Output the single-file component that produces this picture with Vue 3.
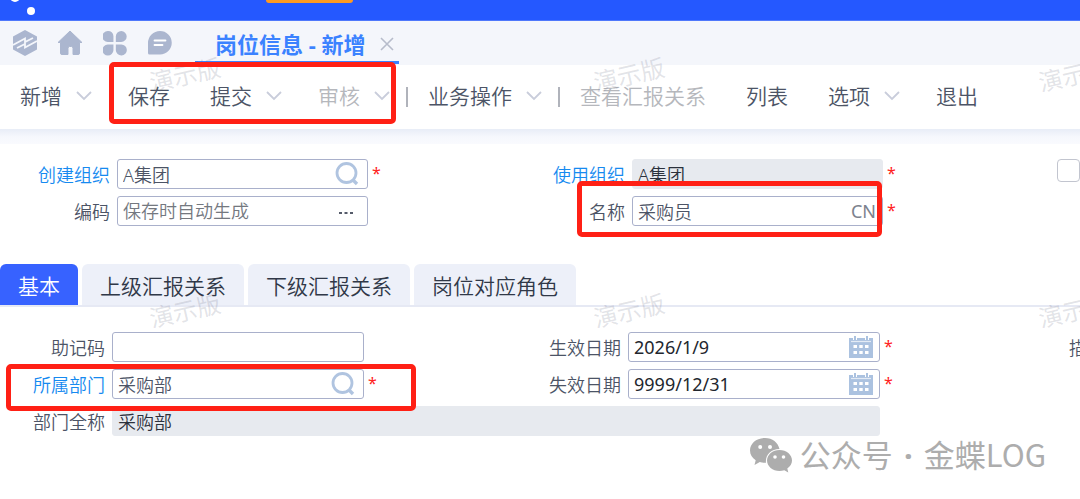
<script setup>
import { ref } from 'vue'

const tools = [
  { text: '新增', menu: true },
  { text: '保存' },
  { text: '提交', menu: true },
  { text: '审核', menu: true, off: true, sep: true },
  { text: '业务操作', menu: true, sep: true },
  { text: '查看汇报关系', off: true },
  { text: '列表' },
  { text: '选项', menu: true },
  { text: '退出' },
]
const tabs = ['基本', '上级汇报关系', '下级汇报关系', '岗位对应角色']
const active = ref(0)

const createOrg = ref('A集团')
const code = ref('')
const useOrg = ref('A集团')
const name = ref('采购员')
const mnemonic = ref('')
const dept = ref('采购部')
const deptFull = ref('采购部')
const flagged = ref(false)
const dates = ref([
  { id: 'start', label: '生效日期', value: '2026/1/9' },
  { id: 'end', label: '失效日期', value: '9999/12/31' },
])
</script>

<template>
  <div class="page">
    <header class="top">
      <svg class="logo" width="40" height="20" viewBox="0 0 40 20" aria-hidden="true">
        <circle cx="15" cy="-3" r="5" fill="#fff" />
        <circle cx="31" cy="11" r="4" fill="#fff" />
      </svg>
      <span class="flag"></span>
    </header>

    <nav class="pages">
      <button class="ico" aria-label="平台">
        <svg width="24" height="26" viewBox="0 0 24 26">
          <path d="M12 0 24 6.500V19.500L12 26 0 19.500V6.500Z" fill="#abb6cf" />
          <path d="M0 15 12 8.500V12L20 8M24 11 12 17.500V14L4 18" fill="none" stroke="#f4f6fb" stroke-width="1.800" />
        </svg>
      </button>
      <button class="ico" aria-label="首页">
        <svg width="24" height="26" viewBox="0 0 24 26">
          <path d="M12 1 24 12.500H21.500V23Q21.500 24.500 20 24.500H15V18.500Q15 16.500 13.500 16.500H11.500Q10 16.500 10 18.500V24.500H4Q2.500 24.500 2.500 23V12.500H0Z" fill="#abb6cf" stroke="#abb6cf" stroke-linejoin="round" />
        </svg>
      </button>
      <button class="ico" aria-label="应用">
        <svg width="24" height="26" viewBox="1 1 22 25" fill="#abb6cf">
          <path d="M5 2A5 5 0 0 1 10.500 7V12.500H5A5.200 5.200 0 0 1 5 2ZM18 2A5.200 5.200 0 0 1 18 12.500H12.800V7A5.200 5.200 0 0 1 18 2ZM5 15H10.500V20.500A5.300 5.300 0 1 1 5 15ZM12.800 15H18A5.300 5.300 0 1 1 12.800 20.500Z" />
        </svg>
      </button>
      <button class="ico" aria-label="消息">
        <svg width="24" height="26" viewBox="0 0 24 26">
          <path d="M12 1A11.700 11.700 0 0 1 12 24.500H1.500Q0 24.500 0 23V13A12 12 0 0 1 12 1Z" fill="#abb6cf" />
          <path d="M6.500 10.500H17.500M6.500 15H14.500" stroke="#fff" stroke-width="1.800" stroke-linecap="round" />
        </svg>
      </button>
      <div class="doc">
        <a href="#">岗位信息 - 新增</a>
        <button class="close" aria-label="关闭">
          <svg width="14" height="14" viewBox="0 0 14 14"><path d="M1 1 13 13M13 1 1 13" stroke="#b7bccb" stroke-width="1.600" /></svg>
        </button>
      </div>
    </nav>

    <div class="tools">
      <template v-for="t in tools" :key="t.text">
        <button class="tool" :class="{ menu: t.menu }" :disabled="t.off">
          {{ t.text }}
          <svg v-if="t.menu" width="16" height="10" viewBox="0 0 16 10"><path d="M1 1 8 8 15 1" fill="none" stroke="#c9cddb" stroke-width="1.800" /></svg>
        </button>
        <span v-if="t.sep" class="sep"></span>
      </template>
    </div>

    <main>
      <section class="grid head">
        <div class="field">
          <label class="link" for="createOrg">创建组织</label>
          <div class="box">
            <input id="createOrg" v-model="createOrg" type="text" />
            <button aria-label="查找创建组织">
              <svg width="24" height="24" viewBox="0 0 24 24"><circle cx="11.500" cy="11" r="9.500" fill="none" stroke="#b0c4e0" stroke-width="2.800" /><path d="M17.500 17.500 22 22" stroke="#b0c4e0" stroke-width="3.400" /></svg>
            </button>
          </div>
          <span class="star">*</span>
        </div>
        <div class="field">
          <label class="link" for="useOrg">使用组织</label>
          <div class="box flat"><input id="useOrg" v-model="useOrg" type="text" readonly /></div>
          <span class="star">*</span>
        </div>
        <div class="tick"><input v-model="flagged" type="checkbox" aria-label="标记" /></div>
        <div class="field">
          <label for="code">编码</label>
          <div class="box">
            <input id="code" v-model="code" type="text" placeholder="保存时自动生成" />
            <button class="more" aria-label="更多">
              <svg width="14" height="4" viewBox="0 0 14 4" fill="#555b6a"><path d="M0 1H3V3H0ZM5.500 1H8.500V3H5.500ZM11 1H14V3H11Z" /></svg>
            </button>
          </div>
        </div>
        <div class="field">
          <label for="name">名称</label>
          <div class="box">
            <input id="name" v-model="name" type="text" />
            <button class="lang">CN</button>
          </div>
          <span class="star">*</span>
        </div>
      </section>

      <div class="tabs" role="tablist">
        <button v-for="(t, i) in tabs" :key="t" role="tab" :aria-selected="active === i" :class="{ on: active === i }" @click="active = i">{{ t }}</button>
      </div>

      <section class="grid basic">
        <div class="field">
          <label for="mnemonic">助记码</label>
          <div class="box"><input id="mnemonic" v-model="mnemonic" type="text" /></div>
        </div>
        <div v-for="(d, i) in dates" :key="d.id" class="field" :class="'date' + i">
          <label :for="d.id">{{ d.label }}</label>
          <div class="box dark">
            <input :id="d.id" v-model="d.value" type="text" />
            <button class="cal" :aria-label="'选择' + d.label">
              <svg width="24" height="22" viewBox="0 0 24 22">
                <path d="M0 2H4V4H8V2H16V4H20V2H24V22H0Z" fill="#abc2e0" />
                <path d="M2 5.500H22" stroke="#e3ebf5" stroke-width="1.200" />
                <path d="M6 0V4M18 0V4" stroke="#abc2e0" stroke-width="2" />
                <path d="M4.500 9H8V12H4.500ZM10.300 9H13.700V12H10.300ZM16 9H19.500V12H16ZM4.500 15H8V18H4.500ZM10.300 15H13.700V18H10.300ZM16 15H19.500V18H16Z" fill="#fff" />
              </svg>
            </button>
          </div>
          <span class="star">*</span>
        </div>
        <div class="remark">描述</div>
        <div class="field">
          <label class="link" for="dept">所属部门</label>
          <div class="box">
            <input id="dept" v-model="dept" type="text" />
            <button aria-label="查找所属部门">
              <svg width="24" height="24" viewBox="0 0 24 24"><circle cx="11.500" cy="11" r="9.500" fill="none" stroke="#b0c4e0" stroke-width="2.800" /><path d="M17.500 17.500 22 22" stroke="#b0c4e0" stroke-width="3.400" /></svg>
            </button>
          </div>
          <span class="star">*</span>
        </div>
        <div class="field wide">
          <label for="deptFull">部门全称</label>
          <div class="box flat"><input id="deptFull" v-model="deptFull" type="text" readonly /></div>
        </div>
      </section>
    </main>

    <span v-for="n in 6" :key="n" class="stamp" :class="'s' + n">演示版</span>
    <i class="mark m1"></i>
    <i class="mark m2"></i>
    <i class="mark m3"></i>

    <div class="credit">
      <svg width="42" height="36" viewBox="0 0 42 36">
        <path d="M15 1C6.500 1 0 6.500 0 13.500 0 17.500 2.200 21 5.700 23.200L4.500 28 9.800 25Q13 26 16 25.700C15 18 21.500 11.800 29.500 12C28 5.500 22.500 1 15 1Z" fill="#adadad" />
        <path d="M29.500 13C22.500 13 17 17.800 17 23.500S22.500 34 29.500 34Q32 34 34.300 33.200L38.300 35.500 37.300 31.500C40.200 29.500 42 26.700 42 23.500 42 17.800 36.500 13 29.500 13Z" fill="#adadad" />
        <g fill="#fff"><circle cx="10.200" cy="10" r="2" /><circle cx="20" cy="10" r="2" /><circle cx="25" cy="20" r="1.800" /><circle cx="33.500" cy="20" r="1.800" /></g>
      </svg>
      <span>公众号<span class="dot"> · </span>金蝶LOG</span>
    </div>
  </div>
</template>

<style>
body {
  margin: 0;
}
</style>

<style scoped>
.page {
  position: relative;
  min-height: 100vh;
  overflow: hidden;
  background: #fff;
  color: #4c5466;
  font-family: "Noto Sans", "Noto Sans CJK SC", sans-serif;
  font-size: 18px;
  font-weight: 350;
}
.page * {
  box-sizing: border-box;
}
button,
input {
  margin: 0;
  padding: 0;
  border: 0;
  background: none;
  color: inherit;
  font: inherit;
}
svg {
  display: block;
  flex: none;
}
.top {
  display: flex;
  height: 21px;
  background: #2558ff;
  border-bottom: 1px solid #4f78fb;
}
.flag {
  width: 87px;
  height: 3px;
  margin-left: 226px;
  border-radius: 0 0 3px 3px;
  background: #ff9a1f;
}
.pages {
  display: flex;
  align-items: center;
  gap: 21px;
  height: 44px;
  padding-left: 13px;
  background: #f4f6fb;
}
.ico {
  width: 24px;
  flex: none;
}
.doc {
  display: flex;
  align-items: center;
  align-self: stretch;
  gap: 15px;
  height: 43px;
  margin-left: 2px;
  padding: 5px 5px 0 20px;
  border-bottom: 3px solid #3b82ff;
}
.doc a {
  color: #3b82ff;
  font-size: 22px;
  font-weight: 700;
  line-height: 32px;
  text-decoration: none;
  white-space: nowrap;
}
.tools {
  display: flex;
  align-items: center;
  height: 64px;
}
.tool {
  display: flex;
  align-items: center;
  flex: none;
  gap: 14px;
  padding: 0 20px 2px;
  font-size: 21px;
  line-height: 32px;
}
.tool.menu {
  padding-right: 16px;
}
.tool:disabled {
  color: #b5b7bc;
}
.sep {
  width: 2px;
  height: 20px;
  flex: none;
  background: #b0b3bb;
}
main {
  background: linear-gradient(#e8edf7, #f6f8fd 8px, #f9fafe 15px, #fff 15px);
}
.grid {
  display: grid;
  grid-template-columns: 43fr 43fr 4fr;
  row-gap: 7px;
}
.head {
  --label: 110px;
  --tail: 147px;
  padding: 30px 0 38px;
}
.basic {
  --label: 105px;
  --tail: 152px;
  padding-top: 25px;
}
.field {
  display: grid;
  grid-template-columns: var(--label) 1fr var(--tail);
  min-width: 0;
}
.field label {
  padding-top: 2px;
  line-height: 28px;
  text-align: right;
  white-space: nowrap;
}
.field .link {
  color: #168af0;
}
.box {
  display: flex;
  align-items: center;
  height: 30px;
  min-width: 0;
  margin-left: 7px;
  padding: 0 8px 0 5px;
  border: 1px solid #a9b0cb;
  border-radius: 3px;
}
.box input {
  flex: 1;
  min-width: 0;
  height: 28px;
  padding-bottom: 1px;
  outline: 0;
}
.box input::placeholder {
  color: #74787f;
  opacity: 1;
}
.flat {
  border-color: #e7eaef;
  background: #e7eaef;
  color: #2b313c;
}
.dark {
  color: #22262e;
  font-weight: 400;
}
.box .cal {
  margin-right: -2px;
}
.more {
  padding: 4px 6px 0 0;
}
.box .lang {
  margin-right: -2px;
  color: #7c828e;
  font-weight: 400;
}
.star {
  padding-left: 4px;
  color: #f22;
  font-size: 16px;
  font-weight: 400;
  line-height: 28px;
}
.tick {
  padding-left: 27px;
}
.tick input {
  appearance: none;
  display: block;
  width: 23px;
  height: 23px;
  border: 1px solid #c2c5cf;
  border-radius: 4px;
}
.tabs {
  display: flex;
  gap: 4px;
  border-bottom: 2px solid #e6e9f4;
}
.tabs button {
  height: 41px;
  padding: 0 18px;
  border-radius: 6px 6px 0 0;
  background: #edf0f9;
  color: #303848;
  font-size: 21px;
  white-space: nowrap;
}
.tabs .on {
  background: #3762ff;
  color: #fff;
}
.date1 {
  grid-area: 2 / 2;
}
.wide {
  grid-area: 3 / 1 / auto / 3;
}
.remark {
  min-width: 0;
  padding: 2px 0 0 37px;
  line-height: 28px;
  white-space: nowrap;
}
.stamp {
  position: absolute;
  color: rgba(110, 115, 135, 0.2);
  font-size: 24px;
  font-weight: 400;
  line-height: 32px;
  white-space: nowrap;
  transform: rotate(-13deg);
  pointer-events: none;
}
.s1,
.s2,
.s3 {
  top: 59px;
}
.s4,
.s5,
.s6 {
  top: 295px;
}
.s1,
.s4 {
  left: 149px;
}
.s2,
.s5 {
  left: 593px;
}
.s3,
.s6 {
  left: 1038px;
}
.mark {
  position: absolute;
  border: 5px solid #ff2015;
  border-radius: 5px;
  pointer-events: none;
}
.m1 {
  left: 109px;
  top: 62px;
  width: 287px;
  height: 62px;
}
.m2 {
  left: 577px;
  top: 181px;
  width: 305px;
  height: 56px;
}
.m3 {
  left: 6px;
  top: 364px;
  width: 410px;
  height: 47px;
}
.credit {
  position: absolute;
  right: 34px;
  bottom: 23px;
  display: flex;
  align-items: center;
  gap: 8px;
  color: #adadad;
  font-family: "Noto Sans CJK SC", sans-serif;
  font-size: 31px;
  font-weight: 400;
  line-height: 42px;
  white-space: nowrap;
}
.dot {
  padding: 0 3px;
  font-family: "Noto Sans", sans-serif;
  font-weight: 700;
}
</style>
